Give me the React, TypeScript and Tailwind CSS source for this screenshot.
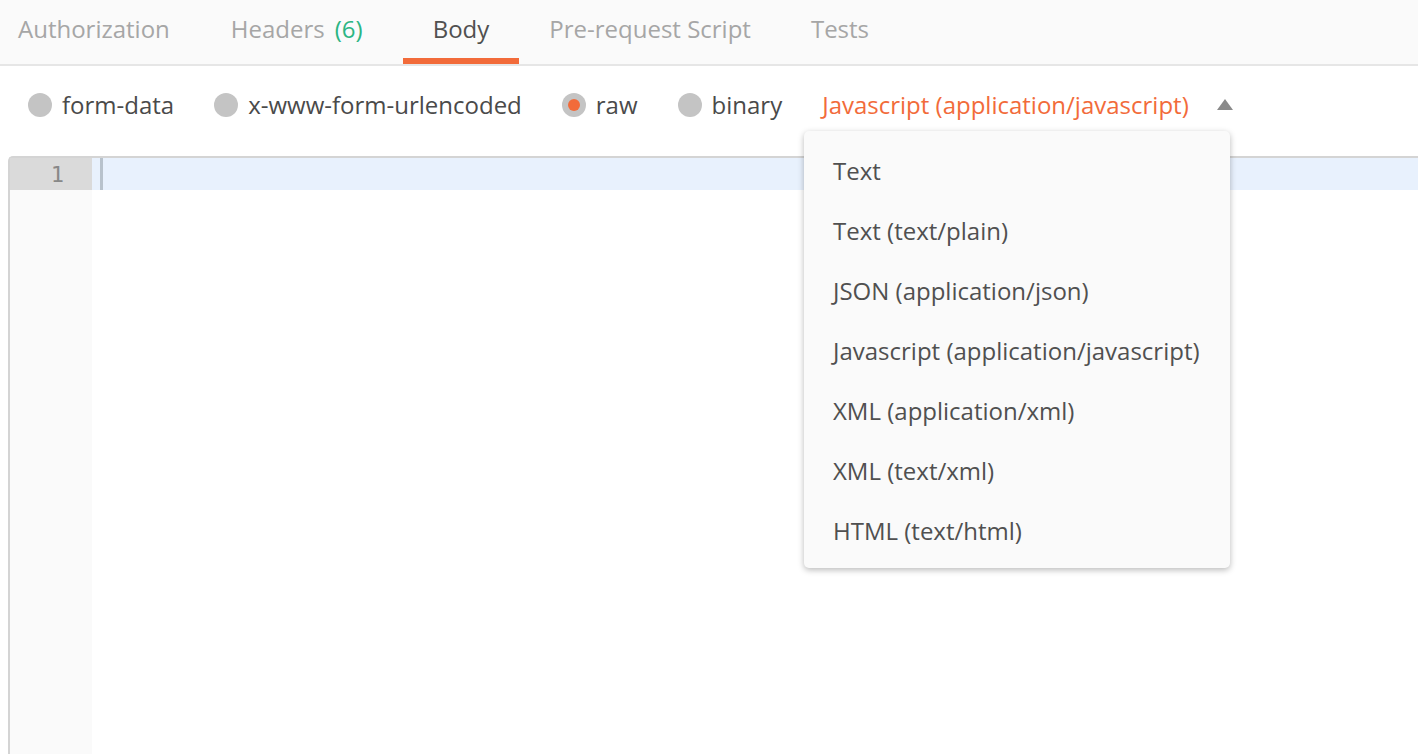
import { useState } from "react";

const TABS = ["Authorization", "Headers", "Body", "Pre-request Script", "Tests"];
const MODES = ["form-data", "x-www-form-urlencoded", "raw", "binary"];
const TYPES = [
  "Text",
  "Text (text/plain)",
  "JSON (application/json)",
  "Javascript (application/javascript)",
  "XML (application/xml)",
  "XML (text/xml)",
  "HTML (text/html)",
];

function Radio({ on }: { on: boolean }) {
  return (
    <span className="grid size-[24px] shrink-0 place-items-center rounded-full bg-[#c4c4c4]">
      {on && <span className="size-[12px] rounded-full bg-[#f26b3a]" />}
    </span>
  );
}

export default function App() {
  const [tab, setTab] = useState("Body");
  const [mode, setMode] = useState("raw");

  return (
    <div
      className="h-[754px] w-[1418px] overflow-hidden bg-white text-[24px] text-[#505050]"
      style={{ fontFamily: '"Open Sans", "Noto Sans", sans-serif' }}
    >
      {/* tabs */}
      <div className="flex h-[66px] border-b-2 border-[#e6e6e6] bg-[#fafafa] pl-[18px]">
        {TABS.map((t, i) => (
          <button
            key={t}
            onClick={() => setTab(t)}
            className={
              "flex h-full items-start border-b-[6px] pt-[12px] leading-[34px] " +
              (i === 0 ? "pr-[30px] " : t === "Headers" ? "pl-[31px] pr-[40px] " : "px-[30px] ") +
              (tab === t ? "border-[#f26b3a] text-[#505050]" : "border-transparent text-[#a6a6a6]")
            }
          >
            {t}
            {t === "Headers" && <span className="ml-[10px] text-[#2bb583]">(6)</span>}
          </button>
        ))}
      </div>

      {/* body modes */}
      <div className="relative flex h-[90px] items-center pb-[12px] pl-[28px]">
        {MODES.map((m) => (
          <label
            key={m}
            onClick={() => setMode(m)}
            className="mr-[40px] flex cursor-pointer items-center gap-[10px] text-[#4a4a4a]"
          >
            <Radio on={mode === m} />
            {m}
          </label>
        ))}
        <span className="text-[#f26b3a]">Javascript (application/javascript)</span>
        <svg width="16" height="11" viewBox="0 0 16 11" className="ml-[28px] mt-[-2px]">
          <path d="M8 0 L16 11 L0 11 Z" fill="#8a8a8a" />
        </svg>

        {/* dropdown */}
        <div className="absolute left-[804px] top-[65px] z-10 w-[426px] rounded-[5px] bg-[#fafafa] pb-[7px] pt-[10px] shadow-[0_2px_6px_rgba(0,0,0,0.28)]">
          {TYPES.map((t) => (
            <div key={t} className="flex h-[60px] items-center px-[29px] text-[#505050]">
              {t}
            </div>
          ))}
        </div>
      </div>

      {/* editor */}
      <div className="ml-[8px] flex h-[600px] flex-col rounded-tl-[5px] border-l-2 border-t-2 border-[#d4d4d4]">
        <div className="flex h-[32px]">
          <div
            className="flex w-[82px] items-center justify-end bg-[#dadada] pr-[28px] text-[22px] text-[#888]"
            style={{ fontFamily: '"DejaVu Sans Mono", monospace' }}
          >
            1
          </div>
          <div className="flex flex-1 items-stretch bg-[#e8f1fd] pl-[8px]">
            <span className="w-[3px] bg-[#b8c2cc]" />
          </div>
        </div>
        <div className="flex flex-1">
          <div className="w-[82px] bg-[#fafafa]" />
          <div className="flex-1 bg-white" />
        </div>
      </div>
    </div>
  );
}
